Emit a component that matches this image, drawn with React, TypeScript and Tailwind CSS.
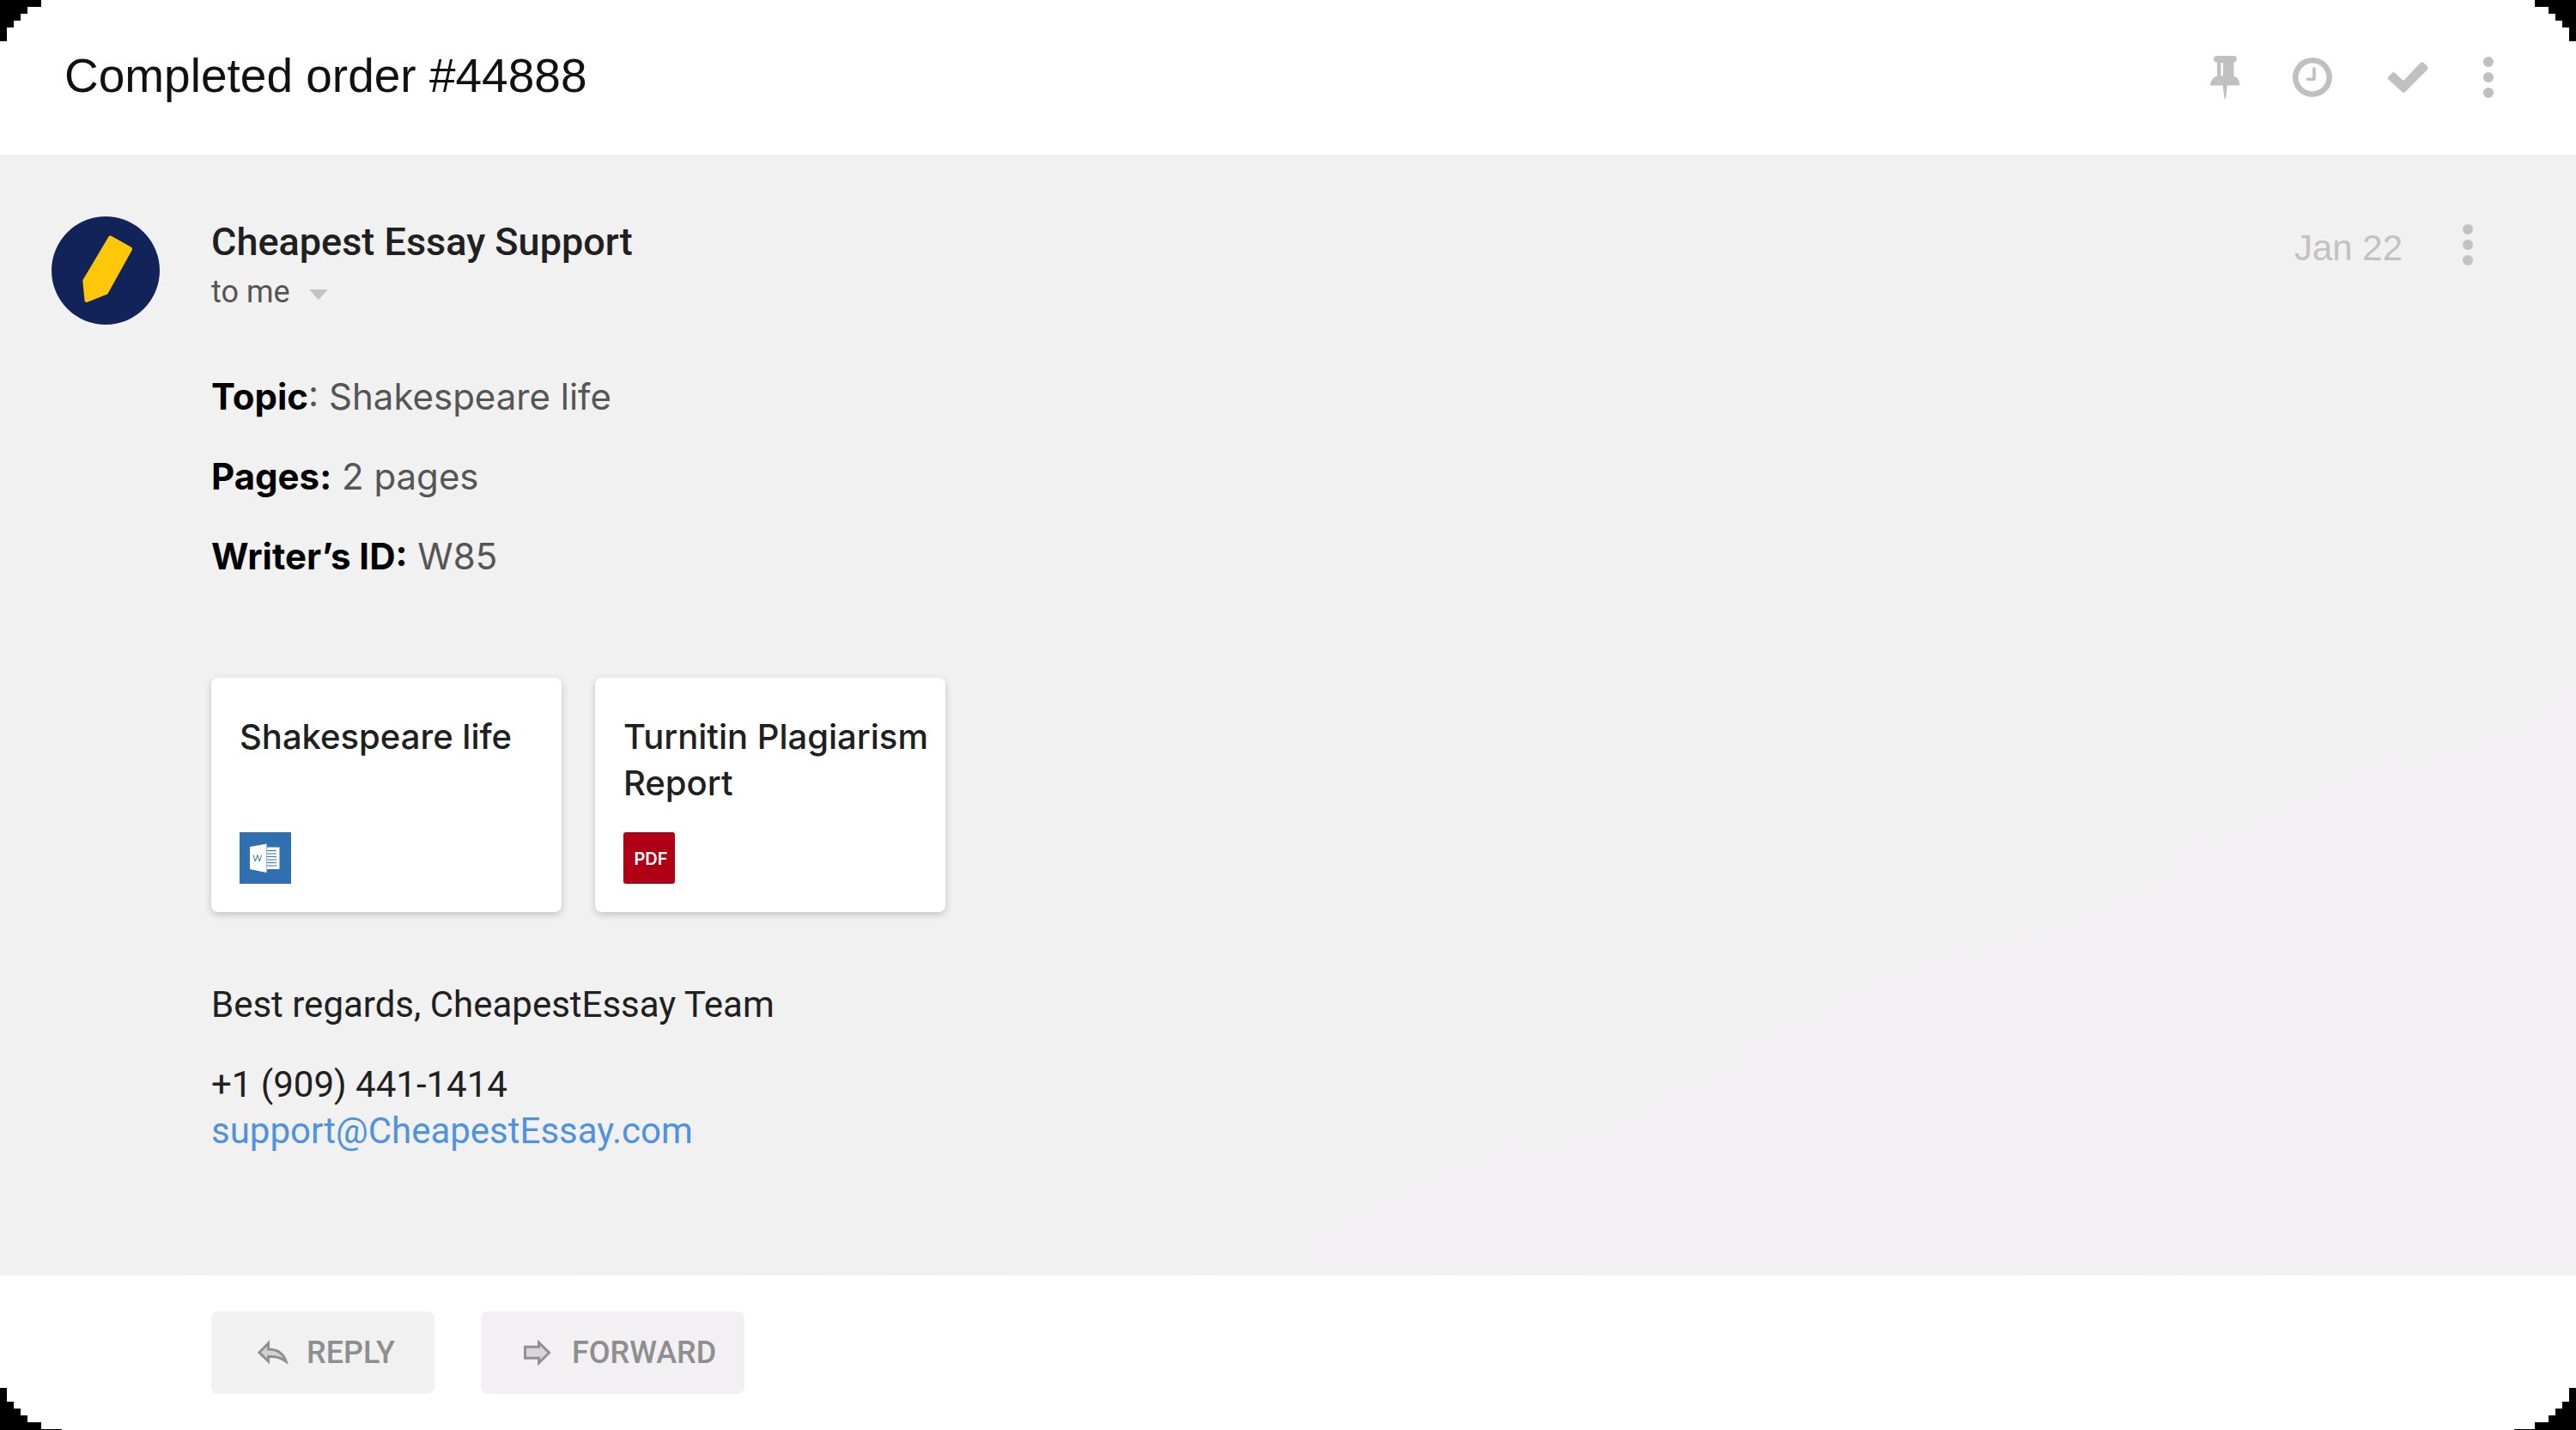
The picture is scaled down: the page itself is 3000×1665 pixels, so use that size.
import React from "react";

const CORNER = "M0 0H48V8H32V16H24V24H16V32H8V48H0Z";

function DotsIcon() {
  return (
    <svg viewBox="0 0 12 48" className="h-12 w-3 fill-current" aria-hidden="true">
      <circle cx="6" cy="6" r="6" />
      <circle cx="6" cy="24" r="6" />
      <circle cx="6" cy="42" r="6" />
    </svg>
  );
}

function PinIcon() {
  return (
    <svg viewBox="0 0 36 52" className="h-13 w-9 fill-current" aria-hidden="true">
      <path
        fillRule="evenodd"
        d="M7.500 1H27A3.700 3.700 0 0 1 27.500 8.400V25C32 25.500 34.500 30 34.500 35.500H19.800L18.200 50.500Q17.300 52 16.500 50.500L14.700 35.500H0.300C0.300 30 3.500 25.500 8 25V8.400A3.700 3.700 0 0 1 7.500 1ZM12.500 9V25L15 24V9Z"
      />
    </svg>
  );
}

function ClockIcon() {
  return (
    <svg viewBox="0 0 46 46" className="size-[46px]" fill="none" stroke="currentColor" aria-hidden="true">
      <circle cx="23" cy="23" r="19.700" strokeWidth="6.600" />
      <path d="M25 13V25.300H17.500" strokeWidth="3.600" strokeLinecap="round" strokeLinejoin="round" />
    </svg>
  );
}

function CheckIcon() {
  return (
    <svg viewBox="0 0 48 38" className="h-[38px] w-12 fill-current" aria-hidden="true">
      <path d="M1.500 18.500L6.200 13.500Q7.500 12.300 8.700 13.500L19 23L38.500 2.500Q40.500 0.500 43 2.500L46.500 6Q48.500 8.500 46.500 10.500L21 36Q19.200 37.500 17.500 36L1.500 21.500Q0 20 1.500 18.500Z" />
    </svg>
  );
}

function Avatar() {
  return (
    <svg viewBox="0 0 126 126" className="size-[126px] shrink-0" role="img" aria-label="Cheapest Essay">
      <circle cx="63" cy="63" r="63" fill="#12235a" />
      <path
        d="M68.500 25L91.500 38L63.500 88.500L41 97.500L38.800 75Z"
        fill="#fec709"
        stroke="#fec709"
        strokeWidth="5"
        strokeLinejoin="round"
      />
    </svg>
  );
}

function WordIcon() {
  return (
    <svg viewBox="0 0 60 60" className="size-15" role="img" aria-label="Word document">
      <rect width="60" height="60" fill="#3070b0" />
      <path d="M12 17L31.500 13.500V47L12 43Z" fill="#fff" />
      <path d="M32 17.500H46.500V43H32Z" fill="#fff" />
      <path d="M32 21.500H43M32 25H43M32 28.500H43M32 32H43M32 35.500H43M32 39H43" stroke="#3070b0" strokeWidth="1.200" />
      <path d="M16 26.500L18.300 34L20.800 26.500L23.300 34L25.600 26.500" fill="none" stroke="#3070b0" strokeWidth="1" />
    </svg>
  );
}

function PdfIcon() {
  return (
    <span className="flex size-15 items-center justify-center rounded-[3px] bg-[#b00015] pt-px pl-1 font-[Inter,sans-serif] text-[20px] font-semibold text-white">
      PDF
    </span>
  );
}

function ReplyIcon() {
  return (
    <svg viewBox="0 0 36 30" className="h-[30px] w-9" aria-hidden="true">
      <path
        d="M12.500 4V11C23 11 30 16 33 25C27 20.500 21 19 12.500 19.500V25L2 14.800Z"
        fill="#d2d2d2"
        stroke="#909090"
        strokeWidth="3"
      />
    </svg>
  );
}

function ForwardIcon() {
  return (
    <svg viewBox="0 0 32 32" className="size-8" aria-hidden="true">
      <path d="M1.500 9.300H17.500V4L29.500 16L17.500 28V22.300H1.500Z" fill="#d8d6d8" stroke="#909090" strokeWidth="3" />
    </svg>
  );
}

function Detail({ label, children }: { label: React.ReactNode; children: React.ReactNode }) {
  return (
    <p>
      {label} {children}
    </p>
  );
}

function Attachment({ title, icon }: { title: string; icon: React.ReactNode }) {
  return (
    <a
      href="#"
      className="flex h-[273px] w-[408px] flex-col justify-between rounded-lg bg-white pt-[42px] pb-[33px] pl-[33px] shadow-[0_3px_8px_rgba(0,0,0,0.2)]"
    >
      <span className="font-[Inter,sans-serif] text-[40px] leading-[54px] font-medium text-[#202020]">{title}</span>
      {icon}
    </a>
  );
}

function Corner({ className }: { className: string }) {
  return (
    <svg viewBox="0 0 48 48" className={"pointer-events-none absolute size-12 " + className} aria-hidden="true">
      <path d={CORNER} shapeRendering="crispEdges" />
    </svg>
  );
}

export default function App() {
  return (
    <div className="relative flex min-h-screen flex-col bg-white font-[Roboto,sans-serif] text-[#202020]">
      <header className="flex h-[180px] items-center justify-between pr-24 pl-[75px]">
        <h1 className="pb-1 font-['Liberation_Sans',sans-serif] text-[55px] text-[#111111]">Completed order #44888</h1>
        <div className="flex items-center text-[#c0c0c0]">
          <button aria-label="Pin" className="mr-[60px]"><PinIcon /></button>
          <button aria-label="Snooze" className="mr-16"><ClockIcon /></button>
          <button aria-label="Done" className="mr-16"><CheckIcon /></button>
          <button aria-label="More options"><DotsIcon /></button>
        </div>
      </header>

      <main className="flex flex-1 items-start bg-linear-to-br from-[#f1f1f1] from-50% to-[#f3f0f3] pt-[72px] pr-[120px] pl-[60px]">
        <Avatar />
        <article className="ml-[60px] flex-1">
          <div className="flex justify-between">
            <div>
              <h2 className="text-[45px] leading-[60px] font-medium">Cheapest Essay Support</h2>
              <button className="flex items-center gap-[22px] text-[36px] leading-[57px] text-[#555555]">
                to me
                <svg viewBox="0 0 22 12" className="mt-1 h-3 w-[22px]" aria-hidden="true">
                  <path d="M0 0H22L11 12Z" fill="#c4c4c4" />
                </svg>
              </button>
            </div>
            <div className="flex h-[66px] items-center gap-[70px] text-[#c2c2c2]">
              <time className="pt-1.5 font-['Liberation_Sans',sans-serif] text-[42px]">Jan 22</time>
              <button aria-label="Message options"><DotsIcon /></button>
            </div>
          </div>

          <div className="mt-[66px] flex flex-col gap-[39px] font-[Inter,sans-serif] text-[42px] leading-[54px] text-[#555555]">
            <Detail label={<><strong className="font-bold text-black">Topic</strong>:</>}>Shakespeare life</Detail>
            <Detail label={<strong className="font-bold text-black">Pages:</strong>}>2 pages</Detail>
            <Detail label={<strong className="font-bold text-black">Writer’s ID:</strong>}>W85</Detail>
          </div>

          <div className="mt-[114px] flex gap-[39px]">
            <Attachment title="Shakespeare life" icon={<WordIcon />} />
            <Attachment title="Turnitin Plagiarism Report" icon={<PdfIcon />} />
          </div>

          <div className="mt-[81px] text-[42px] leading-[54px]">
            <p>Best regards, CheapestEssay Team</p>
            <p className="mt-[39px]">+1 (909) 441-1414</p>
            <a href="mailto:support@CheapestEssay.com" className="text-[#4f92de]">support@CheapestEssay.com</a>
          </div>
        </article>
      </main>

      <footer className="flex h-[180px] items-start gap-[54px] pt-[42px] pl-[246px] text-[36px] font-medium text-[#8e8e8e]">
        <button className="flex h-24 items-center gap-[21px] rounded-lg bg-[#f1f1f2] pr-[46px] pl-[54px]">
          <ReplyIcon />
          REPLY
        </button>
        <button className="flex h-24 items-center gap-6 rounded-lg bg-[#f2f0f3] pr-[33px] pl-[50px]">
          <ForwardIcon />
          FORWARD
        </button>
      </footer>

      <Corner className="top-0 left-0" />
      <Corner className="top-0 right-0 -scale-x-100" />
      <Corner className="bottom-px left-0 -scale-y-100" />
      <Corner className="right-0 bottom-px -scale-100" />
      <span className="absolute bottom-0 left-0 h-px w-18 bg-black" />
      <span className="absolute right-0 bottom-0 h-px w-18 bg-black" />
    </div>
  );
}
